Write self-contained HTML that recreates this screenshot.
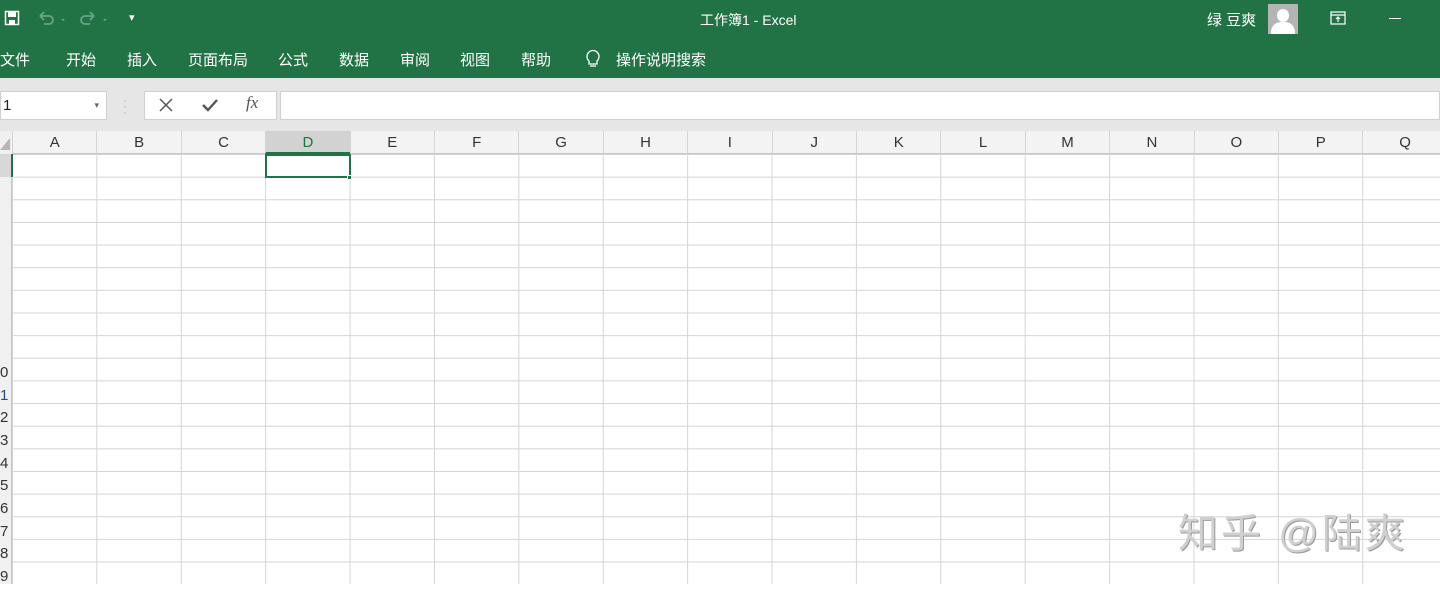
<!DOCTYPE html>
<html><head><meta charset="utf-8"><style>
*{margin:0;padding:0;box-sizing:border-box}
body{width:1440px;height:584px;overflow:hidden;background:#fff;font-family:"Liberation Sans","Noto Sans CJK SC",sans-serif;position:relative}
.a{position:absolute}
.g{background:#217346;left:0;top:0;width:1440px;height:78px}
.w{color:#fff;font-size:14px}
.tb{background:#e6e6e6;left:0;top:78px;width:1440px;height:53px}
.grid{left:0;top:131px;width:1440px;height:453px;
background-image:linear-gradient(to right,#d4d4d4 1px,transparent 1px),linear-gradient(to bottom,#d4d4d4 1px,transparent 1px);
background-size:84.4px 22.65px;background-position:12px 0,0 23px}
.ch{top:131px;height:23px;background:#f3f3f3;border-bottom:1px solid #c6c6c6;font-size:15px;color:#333;text-align:center;line-height:24px}
.rh{left:0;width:12px;background:#f0f0f0;border-right:1px solid #c6c6c6;top:131px;height:453px}
</style></head><body>
<div class="a g"></div>
<svg class="a" style="left:4px;top:10px" width="16" height="16" viewBox="0 0 16 16"><rect x="1.5" y="1.5" width="13" height="13" fill="none" stroke="#fff" stroke-width="1.5"/><rect x="4" y="2" width="8" height="5" fill="#fff"/><rect x="5" y="10" width="6" height="4" fill="#fff"/></svg>
<svg class="a" style="left:37px;top:11px" width="30" height="16" viewBox="0 0 30 16"><path d="M3 5h9a4 4 0 010 8H7M3 5l4-4M3 5l4 4" stroke="#6aa386" stroke-width="1.8" fill="none"/><path d="M24 8l2 2 2-2z" fill="#6aa386"/></svg>
<svg class="a" style="left:79px;top:11px" width="30" height="16" viewBox="0 0 30 16"><path d="M15 5H6a4 4 0 000 8h5M15 5l-4-4M15 5l-4 4" stroke="#6aa386" stroke-width="1.8" fill="none"/><path d="M24 8l2 2 2-2z" fill="#6aa386"/></svg>
<div class="a w" style="left:129px;top:11px;font-size:11px">▾</div>
<div class="a w" style="left:700px;top:10px">工作簿1 - Excel</div>
<div class="a w" style="left:1207px;top:9px;font-size:15px">绿 豆爽</div>
<div class="a" style="left:1268px;top:4px;width:30px;height:30px;background:#b4b4b4;overflow:hidden"><div class="a" style="left:9px;top:5px;width:12px;height:13px;border-radius:50%;background:#fff"></div><div class="a" style="left:3px;top:18px;width:24px;height:16px;border-radius:10px 10px 0 0;background:#fff"></div></div>
<svg class="a" style="left:1330px;top:11px" width="16" height="14"><rect x="1" y="1" width="14" height="12" fill="none" stroke="#fff" stroke-width="1.2"/><path d="M1 4h14M8 6v5M6 8l2-2 2 2" stroke="#fff" stroke-width="1.2" fill="none"/></svg>
<div class="a" style="left:1389px;top:18px;width:12px;height:1px;background:#fff"></div>
<div class="a w" style="left:0;top:49px;font-size:15px">文件</div>
<div class="a w" style="left:66px;top:49px;font-size:15px">开始</div>
<div class="a w" style="left:127px;top:49px;font-size:15px">插入</div>
<div class="a w" style="left:188px;top:49px;font-size:15px">页面布局</div>
<div class="a w" style="left:278px;top:49px;font-size:15px">公式</div>
<div class="a w" style="left:339px;top:49px;font-size:15px">数据</div>
<div class="a w" style="left:400px;top:49px;font-size:15px">审阅</div>
<div class="a w" style="left:460px;top:49px;font-size:15px">视图</div>
<div class="a w" style="left:521px;top:49px;font-size:15px">帮助</div>
<svg class="a" style="left:585px;top:49px" width="16" height="20"><path d="M4 12a6 6 0 118 0v3H4z" fill="none" stroke="#fff" stroke-width="1.3"/><path d="M5 17h6" stroke="#fff" stroke-width="1.3"/></svg>
<div class="a w" style="left:616px;top:49px;font-size:15px">操作说明搜索</div>
<div class="a tb"></div>
<div class="a" style="left:0;top:91px;width:107px;height:29px;background:#fff;border:1px solid #d0d0d0;font-size:15px;line-height:27px;color:#222;padding-left:2px">1<span class="a" style="right:7px;top:0;font-size:9px;color:#666">▾</span></div>
<div class="a" style="left:123px;top:97px;color:#aaa;font-size:12px;line-height:6px">·<br>·<br>·</div>
<div class="a" style="left:144px;top:91px;width:133px;height:29px;background:#fff;border:1px solid #d0d0d0"></div>
<svg class="a" style="left:158px;top:97px" width="16" height="16"><path d="M2 2l12 12M14 2L2 14" stroke="#555" stroke-width="1.5"/></svg>
<svg class="a" style="left:201px;top:97px" width="18" height="16"><path d="M2 8l5 5 9-10" stroke="#555" stroke-width="2.4" fill="none"/></svg>
<div class="a" style="left:246px;top:93px;font-family:'Liberation Serif',serif;font-style:italic;font-size:17px;color:#555">fx</div>
<div class="a" style="left:280px;top:91px;width:1160px;height:29px;background:#fff;border:1px solid #d0d0d0"></div>
<div class="a grid"></div>
<div class="a rh"></div>
<div class="a" style="left:0;top:131px;width:12px;height:23px;background:#f0f0f0"></div>
<svg class="a" style="left:0;top:136px" width="12" height="16"><path d="M10 2v12H0z" fill="#b5b5b5"/></svg>
<div class="a" style="left:0;top:154px;width:13px;height:23px;background:#d8d8d8;border-right:2px solid #217346"></div>
<div id="cols"></div>
<div class="a" style="left:0;top:362px;font-size:15px;color:#333;line-height:22.65px;width:12px;overflow:hidden;direction:rtl;text-align:left">
<div>0</div><div style="color:#2a4a8a">1</div><div>2</div><div>3</div><div>4</div><div>5</div><div>6</div><div>7</div><div>8</div><div>9</div></div>
<div class="a" style="left:265px;top:154px;width:86px;height:24px;border:2px solid #217346"></div>
<div class="a" style="left:347px;top:175px;width:5px;height:5px;background:#217346;border:1px solid #fff"></div>
<div class="a" style="left:1178px;top:501px;font-size:40px;color:#d0d0d0;text-shadow:1px 1px 0 #9a9a9a;letter-spacing:3px">知乎 @陆爽</div>
<script>
var L="ABCDEFGHIJKLMNOPQ",h="";
for(var i=0;i<17;i++){var x=12+i*84.4;var sel=i==3;
h+='<div class="a ch" style="left:'+x+'px;width:84.4px;border-left:1px solid #d4d4d4;'+(sel?'background:#d2d2d2;color:#217346;border-bottom:2px solid #217346':'')+'">'+L[i]+'</div>';}
document.getElementById('cols').innerHTML=h;
</script>
</body></html>
